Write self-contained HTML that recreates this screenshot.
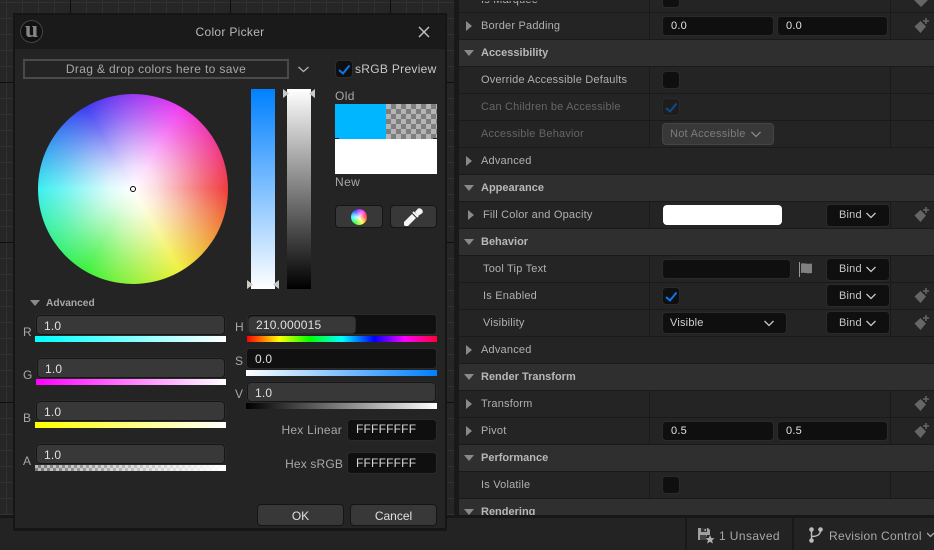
<!DOCTYPE html>
<html><head><meta charset="utf-8"><style>
html,body{margin:0;padding:0;background:#232323}
#p{position:relative;width:934px;height:550px;overflow:hidden;background:#232323;font-family:"Liberation Sans",sans-serif;font-size:11px;color:#c0c0c0}
#p div,#p svg{position:absolute}
.t{white-space:nowrap;line-height:14px;height:14px;letter-spacing:.2px}
.r{left:459px;width:475px;height:26px;background:#242424;border-bottom:1px solid #1a1a1a}
.s{left:459px;width:475px;height:26px;background:#2f2f2f;border-bottom:1px solid #1a1a1a}
.in{background:#0f0f0f;border:1px solid #2a2a2a;border-radius:4px;box-sizing:border-box}
.f{background:#383838;border:1px solid #161616;border-radius:4px;box-sizing:border-box;outline:1px solid #2a2a2a}
.b{background:#383838;border:1px solid #151515;border-radius:4px;box-sizing:border-box;text-align:center;color:#e0e0e0;font-size:12px}
.l{color:#a8a8a8;font-size:12px}
.sp{width:1px;background:#1a1a1a}
.sec{font-weight:bold;color:#b8b8b8;letter-spacing:0}
.lb{color:#b0b0b0}
</style></head><body><div id="p">
<!-- background grid -->
<div style="left:0;top:0;width:459px;height:515px;background-color:#262626;background-image:linear-gradient(90deg,#0e0e0e 1px,transparent 1px),linear-gradient(#0e0e0e 1px,transparent 1px),linear-gradient(90deg,#323232 1px,transparent 1px),linear-gradient(#323232 1px,transparent 1px);background-size:160px 160px,160px 160px,16px 16px,16px 16px;background-position:70px 0,0 82px,6px 0,0 2px"></div>
<div style="left:454px;top:0;width:5px;height:515px;background:#191919"></div>
<!-- status bar -->
<div style="left:0;top:515px;width:934px;height:3px;background:#171717"></div>
<div style="left:0;top:518px;width:934px;height:32px;background:#232323"></div>
<div style="left:685px;top:518px;width:2px;height:32px;background:#191919"></div>
<div style="left:792px;top:518px;width:2px;height:32px;background:#191919"></div>
<svg style="left:698px;top:528px" width="17" height="17" viewBox="0 0 17 17"><path d="M0 0H10L12 2V7H9L7 12H0Z" fill="#a0a0a0"/><rect x="3" y="0" width="6" height="4" fill="#333"/><rect x="6.500" y="1" width="1.500" height="2" fill="#aaa"/><rect x="2" y="7" width="6" height="5" fill="#444"/><path d="M12 7l1.300 3 3.200.3-2.400 2 .8 3.200-2.900-1.700-2.900 1.700.8-3.200-2.400-2 3.200-.3z" fill="#b0b0b0"/></svg>
<div class="t" style="left:719px;top:529px;font-size:12px;color:#a8a8a8;letter-spacing:.4px">1 Unsaved</div>
<svg style="left:808px;top:527px" width="16" height="16" viewBox="0 0 16 16"><circle cx="3.500" cy="2.500" r="2.300" fill="#bbb"/><circle cx="3.500" cy="13.500" r="2.300" fill="#bbb"/><circle cx="12.500" cy="2.500" r="2.300" fill="#bbb"/><path d="M3.500 3V13M3.500 9.500C9 9.500 12.500 8 12.500 3" stroke="#bbb" stroke-width="1.400" fill="none"/></svg>
<div class="t" style="left:829px;top:529px;font-size:12px;color:#a8a8a8;letter-spacing:.3px">Revision Control</div>
<svg style="left:927px;top:532px" width="7" height="6"><path d="M0 1L3.500 4.500L7 1" stroke="#aaa" stroke-width="1.300" fill="none"/></svg>

<!-- right panel -->
<div style="left:459px;top:0;width:475px;height:515px;background:#242424"></div>
<div style="left:0;top:1px;width:934px;height:514px;overflow:hidden">
<div class="r" style="top:-15px"></div><div class="r" style="top:12px"></div>
<div class="s" style="top:39px"></div>
<div class="r" style="top:66px"></div><div class="r" style="top:93px"></div><div class="r" style="top:120px"></div><div class="r" style="top:147px"></div>
<div class="s" style="top:174px"></div>
<div class="r" style="top:201px"></div>
<div class="s" style="top:228px"></div>
<div class="r" style="top:255px"></div><div class="r" style="top:282px"></div><div class="r" style="top:309px"></div><div class="r" style="top:336px"></div>
<div class="s" style="top:363px"></div>
<div class="r" style="top:390px"></div><div class="r" style="top:417px"></div>
<div class="s" style="top:444px"></div>
<div class="r" style="top:471px"></div>
<div class="s" style="top:498px;height:17px;border:0"></div>
<!-- column splitters -->
<div class="sp" style="left:649px;top:-1px;height:40px"></div>
<div class="sp" style="left:890px;top:-1px;height:40px"></div>
<div class="sp" style="left:649px;top:66px;height:81px"></div>
<div class="sp" style="left:890px;top:66px;height:81px"></div>
<div class="sp" style="left:649px;top:201px;height:27px"></div>
<div class="sp" style="left:890px;top:201px;height:27px"></div>
<div class="sp" style="left:649px;top:255px;height:81px"></div>
<div class="sp" style="left:890px;top:255px;height:81px"></div>
<div class="sp" style="left:649px;top:390px;height:54px"></div>
<div class="sp" style="left:890px;top:390px;height:54px"></div>
<div class="sp" style="left:649px;top:471px;height:27px"></div>
<div class="sp" style="left:890px;top:471px;height:27px"></div>

<!-- triangles: down -->
<svg style="left:464px;top:49px" width="11" height="7"><path d="M0 0H10L5 6Z" fill="#8a8a8a"/></svg>
<svg style="left:464px;top:184px" width="11" height="7"><path d="M0 0H10L5 6Z" fill="#8a8a8a"/></svg>
<svg style="left:464px;top:238px" width="11" height="7"><path d="M0 0H10L5 6Z" fill="#8a8a8a"/></svg>
<svg style="left:464px;top:373px" width="11" height="7"><path d="M0 0H10L5 6Z" fill="#8a8a8a"/></svg>
<svg style="left:464px;top:454px" width="11" height="7"><path d="M0 0H10L5 6Z" fill="#8a8a8a"/></svg>
<svg style="left:464px;top:508px" width="11" height="7"><path d="M0 0H10L5 6Z" fill="#8a8a8a"/></svg>
<!-- triangles: right -->
<svg style="left:466px;top:20px" width="7" height="11"><path d="M0 0V10L6 5Z" fill="#8a8a8a"/></svg>
<svg style="left:466px;top:155px" width="7" height="11"><path d="M0 0V10L6 5Z" fill="#8a8a8a"/></svg>
<svg style="left:468px;top:209px" width="7" height="11"><path d="M0 0V10L6 5Z" fill="#8a8a8a"/></svg>
<svg style="left:466px;top:344px" width="7" height="11"><path d="M0 0V10L6 5Z" fill="#8a8a8a"/></svg>
<svg style="left:466px;top:398px" width="7" height="11"><path d="M0 0V10L6 5Z" fill="#8a8a8a"/></svg>
<svg style="left:466px;top:425px" width="7" height="11"><path d="M0 0V10L6 5Z" fill="#8a8a8a"/></svg>

<!-- labels -->
<div class="t lb" style="left:481px;top:-8px">Is Marquee</div>
<div class="t lb" style="left:481px;top:18px">Border Padding</div>
<div class="t sec" style="left:481px;top:45px">Accessibility</div>
<div class="t lb" style="left:481px;top:72px">Override Accessible Defaults</div>
<div class="t" style="left:481px;top:99px;color:#666">Can Children be Accessible</div>
<div class="t" style="left:481px;top:126px;color:#666">Accessible Behavior</div>
<div class="t lb" style="left:481px;top:153px">Advanced</div>
<div class="t sec" style="left:481px;top:180px">Appearance</div>
<div class="t lb" style="left:483px;top:207px">Fill Color and Opacity</div>
<div class="t sec" style="left:481px;top:234px">Behavior</div>
<div class="t lb" style="left:483px;top:261px">Tool Tip Text</div>
<div class="t lb" style="left:483px;top:288px">Is Enabled</div>
<div class="t lb" style="left:483px;top:315px">Visibility</div>
<div class="t lb" style="left:481px;top:342px">Advanced</div>
<div class="t sec" style="left:481px;top:369px">Render Transform</div>
<div class="t lb" style="left:481px;top:396px">Transform</div>
<div class="t lb" style="left:481px;top:423px">Pivot</div>
<div class="t sec" style="left:481px;top:450px">Performance</div>
<div class="t lb" style="left:481px;top:477px">Is Volatile</div>
<div class="t sec" style="left:481px;top:504px">Rendering</div>
</div>

<!-- value controls -->
<div class="in" style="left:662px;top:-7px;width:18px;height:15px"></div>
<div class="in" style="left:662px;top:16px;width:112px;height:20px"></div><div class="t" style="left:671px;top:19px;color:#e0e0e0">0.0</div>
<div class="in" style="left:777px;top:16px;width:111px;height:20px"></div><div class="t" style="left:786px;top:19px;color:#e0e0e0">0.0</div>
<div class="in" style="left:662px;top:71px;width:18px;height:18px"></div>
<div class="in" style="left:662px;top:98px;width:18px;height:18px;background:#1d1d1d"></div>
<svg style="left:665px;top:102px" width="13" height="11"><path d="M1 6L5 9.500L11.500 1.500" stroke="#0e4a8c" stroke-width="2" fill="none"/></svg>
<div class="in" style="left:662px;top:123px;width:112px;height:22px;background:#383838;border-color:#454545"></div>
<div class="t" style="left:670px;top:127px;color:#7d7d7d;letter-spacing:.25px">Not Accessible</div>
<svg style="left:751px;top:131px" width="10" height="7"><path d="M.5 1L5 5.500L9.500 1" stroke="#8a8a8a" stroke-width="1.300" fill="none"/></svg>
<div style="left:663px;top:205px;width:119px;height:20px;background:#fff;border-radius:4px"></div>
<div class="in" style="left:662px;top:259px;width:129px;height:20px"></div>
<div style="left:799px;top:262px;width:1px;height:15px;background:#999"></div>
<svg style="left:800px;top:262px" width="13" height="13"><path d="M1 1.500C4 .5 7 2.500 12 1.500V11C7 12 4 10 1 11Z" fill="#808080"/></svg>
<div class="in" style="left:662px;top:287px;width:18px;height:18px"></div>
<svg style="left:665px;top:291px" width="13" height="11"><path d="M1 6L5 9.500L11.500 1.500" stroke="#0a78f0" stroke-width="2" fill="none"/></svg>
<div class="in" style="left:662px;top:312px;width:125px;height:22px"></div>
<div class="t" style="left:670px;top:316px;color:#d0d0d0">Visible</div>
<svg style="left:764px;top:320px" width="10" height="7"><path d="M.5 1L5 5.500L9.500 1" stroke="#c8c8c8" stroke-width="1.300" fill="none"/></svg>
<div class="in" style="left:662px;top:421px;width:112px;height:20px"></div><div class="t" style="left:671px;top:424px;color:#e0e0e0">0.5</div>
<div class="in" style="left:777px;top:421px;width:111px;height:20px"></div><div class="t" style="left:786px;top:424px;color:#e0e0e0">0.5</div>
<div class="in" style="left:662px;top:476px;width:18px;height:18px"></div>

<!-- bind buttons -->
<div class="in" style="left:826px;top:204px;width:64px;height:23px"></div><div class="t" style="left:839px;top:208px;color:#c8c8c8">Bind</div>
<svg style="left:866px;top:212px" width="10" height="7"><path d="M.5 1L5 5.500L9.500 1" stroke="#c8c8c8" stroke-width="1.300" fill="none"/></svg>
<div class="in" style="left:826px;top:258px;width:64px;height:23px"></div><div class="t" style="left:839px;top:262px;color:#c8c8c8">Bind</div>
<svg style="left:866px;top:266px" width="10" height="7"><path d="M.5 1L5 5.500L9.500 1" stroke="#c8c8c8" stroke-width="1.300" fill="none"/></svg>
<div class="in" style="left:826px;top:284px;width:64px;height:23px"></div><div class="t" style="left:839px;top:289px;color:#c8c8c8">Bind</div>
<svg style="left:866px;top:293px" width="10" height="7"><path d="M.5 1L5 5.500L9.500 1" stroke="#c8c8c8" stroke-width="1.300" fill="none"/></svg>
<div class="in" style="left:826px;top:311px;width:64px;height:23px"></div><div class="t" style="left:839px;top:316px;color:#c8c8c8">Bind</div>
<svg style="left:866px;top:320px" width="10" height="7"><path d="M.5 1L5 5.500L9.500 1" stroke="#c8c8c8" stroke-width="1.300" fill="none"/></svg>

<!-- key icons -->
<svg style="left:914px;top:-7px" width="16" height="14" viewBox="0 0 16 14"><path d="M7 0L14 7L7 14L0 7Z" fill="#666"/></svg>
<svg style="left:914px;top:18px" width="16" height="16" viewBox="0 0 16 16"><path d="M6.500 3L12 8.500L6.500 15L.5 8.500Z" fill="#666"/><path d="M12 0V6M9 3H15" stroke="#666" stroke-width="1.500"/></svg>
<svg style="left:914px;top:207px" width="16" height="16" viewBox="0 0 16 16"><path d="M6.500 3L12 8.500L6.500 15L.5 8.500Z" fill="#666"/><path d="M12 0V6M9 3H15" stroke="#666" stroke-width="1.500"/></svg>
<svg style="left:914px;top:288px" width="16" height="16" viewBox="0 0 16 16"><path d="M6.500 3L12 8.500L6.500 15L.5 8.500Z" fill="#666"/><path d="M12 0V6M9 3H15" stroke="#666" stroke-width="1.500"/></svg>
<svg style="left:914px;top:315px" width="16" height="16" viewBox="0 0 16 16"><path d="M6.500 3L12 8.500L6.500 15L.5 8.500Z" fill="#666"/><path d="M12 0V6M9 3H15" stroke="#666" stroke-width="1.500"/></svg>
<svg style="left:914px;top:396px" width="16" height="16" viewBox="0 0 16 16"><path d="M6.500 3L12 8.500L6.500 15L.5 8.500Z" fill="#666"/><path d="M12 0V6M9 3H15" stroke="#666" stroke-width="1.500"/></svg>
<svg style="left:914px;top:423px" width="16" height="16" viewBox="0 0 16 16"><path d="M6.500 3L12 8.500L6.500 15L.5 8.500Z" fill="#666"/><path d="M12 0V6M9 3H15" stroke="#666" stroke-width="1.500"/></svg>

<!-- dialog -->
<div style="left:13px;top:13px;width:434px;height:518px;background:#151515;border-radius:1px"></div>
<div style="left:15px;top:15px;width:430px;height:34px;background:#1a1a1a"></div>
<div style="left:15px;top:49px;width:430px;height:479px;background:#242424"></div>
<div style="left:20px;top:20px;width:21px;height:21px;border-radius:50%;background:#111;border:1px solid #444;box-sizing:content-box"></div>
<div style="left:20px;top:17px;width:23px;height:26px;line-height:26px;text-align:center;font-family:'Liberation Serif',serif;font-weight:bold;font-size:24px;color:#858585">u</div>
<div class="t" style="left:130px;width:200px;text-align:center;top:25px;font-size:12px;color:#b8b8b8;letter-spacing:.3px">Color Picker</div>
<svg style="left:418px;top:26px" width="12" height="12"><path d="M1 1L11 11M11 1L1 11" stroke="#c8c8c8" stroke-width="1.400"/></svg>

<div style="left:23px;top:59px;width:266px;height:20px;border:2px solid #4a4a4a;box-sizing:border-box"></div>
<div class="t" style="left:23px;width:266px;text-align:center;top:62px;font-size:12px;color:#a8a8a8;letter-spacing:.35px">Drag &amp; drop colors here to save</div>
<svg style="left:298px;top:66px" width="11" height="7"><path d="M.5 1L5.500 5.500L10.500 1" stroke="#b0b0b0" stroke-width="1.300" fill="none"/></svg>
<div style="left:335px;top:60px;width:18px;height:18px;background:#0f0f0f;border:1px solid #2c2c2c;border-radius:4px;box-sizing:border-box"></div>
<svg style="left:338px;top:64px" width="13" height="11"><path d="M1 6L5 9.500L11.500 1.500" stroke="#0a78f0" stroke-width="2" fill="none"/></svg>
<div class="t" style="left:355px;top:62px;font-size:12px;color:#c8c8c8;letter-spacing:.3px">sRGB Preview</div>

<!-- wheel -->
<div style="left:38px;top:94px;width:190px;height:190px;border-radius:50%;background:radial-gradient(closest-side,#fff 0,rgba(255,255,255,.82) 25%,rgba(255,255,255,.54) 50%,rgba(255,255,255,.25) 75%,rgba(255,255,255,0) 100%),conic-gradient(from 90deg,#f03c3c,#f0f03c 60deg,#3cf03c 120deg,#3cf0f0 180deg,#3c3cf0 240deg,#f03cf0 300deg,#f03c3c)"></div>
<div style="left:130px;top:186px;border:1.500px solid #000;background:#fff;border-radius:50%;box-sizing:content-box;width:4px;height:4px"></div>

<!-- bars -->
<div style="left:251px;top:89px;width:24px;height:200px;background:linear-gradient(#0080ff,#fff)"></div>
<div style="left:287px;top:89px;width:24px;height:200px;background:linear-gradient(#fff,#000)"></div>
<svg style="left:283px;top:89px" width="32" height="9"><path d="M0 0V9L6 4.500Z M32 0V9L26 4.500Z" fill="#c8c8c8"/></svg>
<svg style="left:247px;top:280px" width="32" height="9"><path d="M0 0V9L6 4.500Z M32 0V9L26 4.500Z" fill="#c8c8c8"/></svg>

<!-- swatches -->
<div class="t l" style="left:335px;top:89px;letter-spacing:.4px">Old</div>
<div style="left:335px;top:104px;width:51px;height:35px;background:#00b7ff"></div>
<div style="left:386px;top:104px;width:51px;height:35px;background:repeating-conic-gradient(#7e7e7e 0 25%,#b4b4b4 0 50%) 0 0/10px 10px"></div>
<div style="left:335px;top:139px;width:102px;height:35px;background:#fff"></div>
<div style="left:335px;top:138px;width:4px;height:1px;background:#222"></div>
<div style="left:433px;top:138px;width:4px;height:1px;background:#222"></div>
<div class="t l" style="left:335px;top:175px;letter-spacing:.4px">New</div>
<div class="b" style="left:335px;top:205px;width:48px;height:23px"></div>
<div style="left:351px;top:209px;width:16px;height:16px;border-radius:50%;background:radial-gradient(closest-side,rgba(255,255,255,.9),rgba(255,255,255,0)),conic-gradient(from 90deg,#f33,#ff3,#3f3,#3ff,#33f,#f3f,#f33)"></div>
<div class="b" style="left:390px;top:205px;width:47px;height:23px"></div>
<svg style="left:403px;top:207px" width="21" height="20" viewBox="0 0 21 20"><path d="M1 15L9 7L13 11L5 19H2L1 18Z" fill="#f4f4f4"/><path d="M10 5L15 10" stroke="#f4f4f4" stroke-width="2"/><path d="M12 5L15 1.500A3.500 3.500 0 0 1 19.500 6L15 9Z" fill="#f4f4f4"/></svg>

<!-- advanced -->
<svg style="left:30px;top:300px" width="11" height="7"><path d="M0 0H10L5 6Z" fill="#8a8a8a"/></svg>
<div class="t" style="left:46px;top:297px;font-weight:bold;font-size:10.2px;color:#a8a8a8;letter-spacing:0">Advanced</div>

<!-- RGBA -->
<div class="t l" style="left:23px;top:325px">R</div>
<div class="f" style="left:36px;top:315px;width:189px;height:20px"></div><div class="t" style="left:44px;top:319px;font-size:12px;color:#e0e0e0">1.0</div>
<div style="left:35px;top:336px;width:191px;height:6px;background:linear-gradient(90deg,#0ff,#fff)"></div>
<div class="t l" style="left:23px;top:368px">G</div>
<div class="f" style="left:37px;top:358px;width:188px;height:20px"></div><div class="t" style="left:45px;top:362px;font-size:12px;color:#e0e0e0">1.0</div>
<div style="left:36px;top:379px;width:190px;height:6px;background:linear-gradient(90deg,#f0f,#fff)"></div>
<div class="t l" style="left:23px;top:411px">B</div>
<div class="f" style="left:36px;top:401px;width:189px;height:20px"></div><div class="t" style="left:44px;top:405px;font-size:12px;color:#e0e0e0">1.0</div>
<div style="left:35px;top:422px;width:191px;height:6px;background:linear-gradient(90deg,#ff0,#fff)"></div>
<div class="t l" style="left:23px;top:454px">A</div>
<div class="f" style="left:36px;top:444px;width:189px;height:20px"></div><div class="t" style="left:44px;top:448px;font-size:12px;color:#e0e0e0">1.0</div>
<div style="left:35px;top:465px;width:191px;height:6px;background:linear-gradient(90deg,rgba(255,255,255,0),#fff),repeating-conic-gradient(#777 0 25%,#bbb 0 50%) 0 0/6px 6px"></div>

<!-- HSV -->
<div class="t l" style="left:235px;top:320px">H</div>
<div class="in" style="left:247px;top:314px;width:190px;height:21px;background:#101010"></div>
<div class="f" style="left:248px;top:316px;width:108px;height:18px;outline:0;border-color:#2b2b2b"></div>
<div class="t" style="left:256px;top:318px;font-size:12px;color:#e0e0e0">210.000015</div>
<div style="left:247px;top:336px;width:190px;height:6px;background:linear-gradient(90deg,#f00,#ff0 17%,#0f0 33%,#0ff 50%,#00f 67%,#f0f 83%,#f03)"></div>
<div class="t l" style="left:235px;top:354px">S</div>
<div class="in" style="left:246px;top:348px;width:191px;height:21px;background:#101010"></div>
<div class="t" style="left:255px;top:352px;font-size:12px;color:#e0e0e0">0.0</div>
<div style="left:246px;top:370px;width:191px;height:6px;background:linear-gradient(90deg,#fff,#0080ff)"></div>
<div class="t l" style="left:235px;top:387px">V</div>
<div class="f" style="left:247px;top:382px;width:189px;height:20px"></div>
<div class="t" style="left:255px;top:386px;font-size:12px;color:#e0e0e0">1.0</div>
<div style="left:246px;top:403px;width:191px;height:6px;background:linear-gradient(90deg,#000,#fff)"></div>

<!-- hex -->
<div class="t l" style="left:242px;width:100px;text-align:right;top:423px;letter-spacing:.25px">Hex Linear</div>
<div class="in" style="left:347px;top:419px;width:90px;height:22px"></div>
<div class="t" style="left:356px;top:422px;font-size:12px;color:#d8d8d8;letter-spacing:.2px">FFFFFFFF</div>
<div class="t l" style="left:243px;width:100px;text-align:right;top:457px;letter-spacing:.15px">Hex sRGB</div>
<div class="in" style="left:347px;top:452px;width:90px;height:22px"></div>
<div class="t" style="left:356px;top:456px;font-size:12px;color:#d8d8d8;letter-spacing:.2px">FFFFFFFF</div>

<!-- buttons -->
<div class="b" style="left:257px;top:504px;width:87px;height:22px;line-height:22px">OK</div>
<div class="b" style="left:350px;top:504px;width:87px;height:22px;line-height:22px">Cancel</div>
</div></body></html>
